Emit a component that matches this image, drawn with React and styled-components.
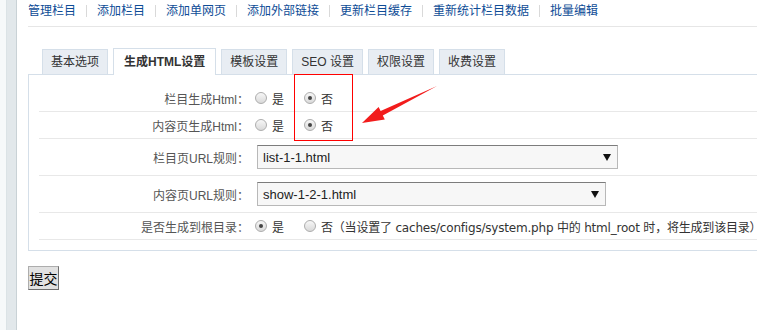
import styled, { createGlobalStyle } from 'styled-components';

const GlobalStyle = createGlobalStyle`
  html, body {
    margin: 0;
    padding: 0;
    background: #fff;
    overflow: hidden;
  }
  body {
    font-family: "Liberation Sans", "Noto Sans CJK SC", sans-serif;
    font-size: 12px;
    color: #333;
  }
`;

const Page = styled.div`
  position: relative;
  display: flex;
  width: 757px;
  height: 330px;
  overflow: hidden;
`;

const Rail = styled.div`
  display: flex;
  flex: 0 0 auto;
`;

const RailEdge = styled.div`
  width: 6px;
  background: #f6f9fa;
  border-right: 1px solid #dbe3e6;
`;

const RailBar = styled.div`
  width: 9px;
  background: #e2e8eb;
  border-right: 1px solid #c9d2d6;
`;

const Main = styled.div`
  flex: 1;
  min-width: 0;
  padding-left: 11px;
`;

const Nav = styled.div`
  display: flex;
  align-items: center;
  height: 22px;
  padding-bottom: 4px;
  border-bottom: 1px solid #e6e6e6;
  white-space: nowrap;
`;

const NavLink = styled.a`
  color: #0e4c96;
  text-decoration: none;
  line-height: 22px;
`;

const NavSep = styled.span`
  display: inline-block;
  width: 1px;
  height: 12px;
  margin: 0 10px;
  background: #d9d9d9;
`;

const TabBar = styled.div`
  display: flex;
  align-items: flex-end;
  margin-top: 21px;
  padding-left: 14px;
  height: 26px;
`;

const Tab = styled.div`
  height: ${(p) => (p.$active ? '26px' : '24px')};
  line-height: ${(p) => (p.$active ? '26px' : '24px')};
  padding: 0 ${(p) => (p.$active ? '10px' : '8px')};
  margin-right: 5px;
  margin-bottom: ${(p) => (p.$active ? '-1px' : '0')};
  background: ${(p) => (p.$active ? '#fff' : '#e8edf3')};
  border: 1px solid #d5dfe9;
  border-bottom: none;
  font-weight: ${(p) => (p.$active ? 'bold' : 'normal')};
  color: #333;
  white-space: nowrap;
  position: relative;
`;

const Panel = styled.div`
  border: 1px solid #d5dfe9;
  margin-right: -30px;
  padding: 10px 0 10px 10px;
`;

const Row = styled.div`
  display: flex;
  align-items: center;
  height: ${(p) => (p.$tall ? '36px' : '26px')};
  border-bottom: 1px solid #e8e8e8;
  white-space: nowrap;
`;

const Label = styled.div`
  flex: 0 0 210px;
  text-align: right;
  color: #555;
`;

const Value = styled.div`
  display: flex;
  align-items: center;
  padding-left: 6px;
  color: #333;
`;

const Option = styled.label`
  display: inline-flex;
  align-items: center;
  gap: 5px;
  margin-right: 20px;
`;

const Note = styled.span`
  font-family: "DejaVu Sans", "Noto Sans CJK SC", sans-serif;
  font-size: 12px;
  letter-spacing: -0.2px;
`;

const RadioDot = styled.span`
  position: relative;
  display: inline-block;
  width: 12px;
  height: 12px;
  box-sizing: border-box;
  border-radius: 50%;
  border: 1px solid #adadad;
  background: linear-gradient(#f7f7f7, #d9d9d9);

  &::after {
    content: '';
    display: ${(p) => (p.$checked ? 'block' : 'none')};
    position: absolute;
    left: 3px;
    top: 3px;
    width: 4px;
    height: 4px;
    border-radius: 50%;
    background: #444;
  }
`;

const FakeSelect = styled.div`
  display: flex;
  align-items: center;
  justify-content: space-between;
  box-sizing: border-box;
  width: ${(p) => p.$width}px;
  height: 24px;
  margin-left: 2px;
  padding: 0 6px 0 5px;
  border: 1px solid #b8b8b8;
  border-top-color: #7c7c7c;
  background: #f7f7f7;
  font-size: 13px;
  color: #222;
`;

const Caret = styled.span`
  width: 0;
  height: 0;
  border-left: 4px solid transparent;
  border-right: 4px solid transparent;
  border-top: 7px solid #111;
`;

const Submit = styled.button`
  margin-top: 15px;
  width: 31px;
  height: 24px;
  padding: 0;
  background: #e1e1e1;
  border: 1px solid #adadad;
  border-right-color: #6e6e6e;
  border-bottom-color: #6e6e6e;
  font-family: "Noto Sans CJK SC", sans-serif;
  font-size: 14px;
  color: #000;
`;

const Highlight = styled.div`
  position: absolute;
  left: 294px;
  top: 74px;
  width: 59px;
  height: 67px;
  box-sizing: border-box;
  border: 1px solid #f00;
`;

const Arrow = styled.svg`
  position: absolute;
  left: 355px;
  top: 80px;
  width: 90px;
  height: 50px;
`;

const navItems = ['管理栏目', '添加栏目', '添加单网页', '添加外部链接', '更新栏目缓存', '重新统计栏目数据', '批量编辑'];
const tabs = ['基本选项', '生成HTML设置', '模板设置', 'SEO 设置', '权限设置', '收费设置'];

const YesNo = ({ yes, noText = '否' }) => (
  <Value>
    <Option>
      <RadioDot $checked={yes} />是
    </Option>
    <Option>
      <RadioDot $checked={!yes} />{noText}
    </Option>
  </Value>
);

export default function App() {
  return (
    <Page>
      <GlobalStyle />
      <Rail>
        <RailEdge />
        <RailBar />
      </Rail>
      <Main>
        <Nav>
          {navItems.map((item, i) => (
            <span key={item} style={{ display: 'contents' }}>
              {i > 0 && <NavSep />}
              <NavLink href="#">{item}</NavLink>
            </span>
          ))}
        </Nav>

        <TabBar>
          {tabs.map((t) => (
            <Tab key={t} $active={t === '生成HTML设置'}>{t}</Tab>
          ))}
        </TabBar>

        <Panel>
          <Row>
            <Label>栏目生成Html：</Label>
            <YesNo yes={false} />
          </Row>
          <Row>
            <Label>内容页生成Html：</Label>
            <YesNo yes={false} />
          </Row>
          <Row $tall>
            <Label>栏目页URL规则：</Label>
            <Value>
              <FakeSelect $width={361}>
                list-1-1.html
                <Caret />
              </FakeSelect>
            </Value>
          </Row>
          <Row $tall>
            <Label>内容页URL规则：</Label>
            <Value>
              <FakeSelect $width={349}>
                show-1-2-1.html
                <Caret />
              </FakeSelect>
            </Value>
          </Row>
          <Row>
            <Label>是否生成到根目录：</Label>
            <YesNo
              yes
              noText={<Note>否（当设置了 caches/configs/system.php 中的 html_root 时，将生成到该目录）</Note>}
            />
          </Row>
        </Panel>

        <Submit>提交</Submit>
      </Main>

      <Highlight />
      <Arrow viewBox="355 80 90 50">
        <polygon
          points="362,123 384.8,119.6 382.8,115.5 437,86 380.6,111.1 378.6,107.1"
          fill="#f21c1c"
        />
      </Arrow>
    </Page>
  );
}
